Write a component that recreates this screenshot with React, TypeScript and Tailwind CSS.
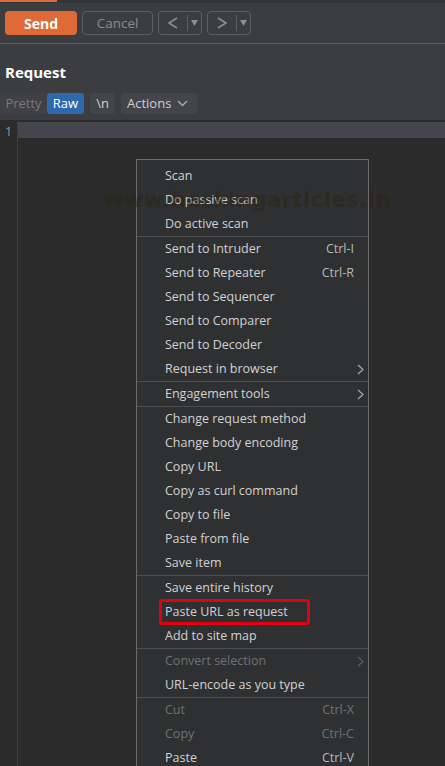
import React from "react";

type Item = { label: string; shortcut?: string; sub?: boolean; disabled?: boolean; highlight?: boolean };

const groups: Item[][] = [
  [{ label: "Scan" }, { label: "Do passive scan" }, { label: "Do active scan" }],
  [
    { label: "Send to Intruder", shortcut: "Ctrl-I" },
    { label: "Send to Repeater", shortcut: "Ctrl-R" },
    { label: "Send to Sequencer" },
    { label: "Send to Comparer" },
    { label: "Send to Decoder" },
    { label: "Request in browser", sub: true },
  ],
  [{ label: "Engagement tools", sub: true }],
  [
    { label: "Change request method" },
    { label: "Change body encoding" },
    { label: "Copy URL" },
    { label: "Copy as curl command" },
    { label: "Copy to file" },
    { label: "Paste from file" },
    { label: "Save item" },
  ],
  [{ label: "Save entire history" }, { label: "Paste URL as request", highlight: true }, { label: "Add to site map" }],
  [{ label: "Convert selection", sub: true, disabled: true }, { label: "URL-encode as you type" }],
  [
    { label: "Cut", shortcut: "Ctrl-X", disabled: true },
    { label: "Copy", shortcut: "Ctrl-C", disabled: true },
    { label: "Paste", shortcut: "Ctrl-V" },
  ],
];

function Chevron({ className }: { className?: string }) {
  return (
    <svg width="7" height="11" viewBox="0 0 7 11" className={className}>
      <path d="M1 1 L6 5.5 L1 10" fill="none" stroke="currentColor" strokeWidth="1.2" />
    </svg>
  );
}

function MenuRow({ it }: { it: Item }) {
  return (
    <div className="relative flex h-[24px] items-center pl-[28px] pr-[14px]">
      <span className={it.disabled ? "text-[#6f7072]" : "text-[#d2d2d2]"}>{it.label}</span>
      <span className="flex-1" />
      {it.shortcut && <span className={it.disabled ? "text-[#6f7072]" : "text-[#b9b9b9]"}>{it.shortcut}</span>}
      {it.sub && (
        <span className={"absolute right-[4px] top-[7px] " + (it.disabled ? "text-[#5e5f61]" : "text-[#a8a8a8]")}>
          <Chevron />
        </span>
      )}
      {it.highlight && (
        <div className="pointer-events-none absolute left-[22px] top-[-1px] h-[26px] w-[151px] rounded-[3px] border-[3px] border-[#e3000f]" />
      )}
    </div>
  );
}

function NavButton({ dir }: { dir: "l" | "r" }) {
  return (
    <div className="flex h-[24px] w-[44px] items-center rounded-[4px] border border-[#5d5e61] text-[#8d8e90]">
      <div className="flex w-[28px] justify-center">
        <svg width="14" height="14" viewBox="0 0 14 14">
          {dir === "l" ? (
            <path d="M11 2 L3 7 L11 12" fill="none" stroke="currentColor" strokeWidth="1.6" />
          ) : (
            <path d="M3 2 L11 7 L3 12" fill="none" stroke="currentColor" strokeWidth="1.6" />
          )}
        </svg>
      </div>
      <div className="h-[16px] w-px bg-[#5d5e61]" />
      <div className="flex flex-1 justify-center">
        <svg width="7" height="6" viewBox="0 0 7 6">
          <path d="M0 0 H7 L3.5 6 Z" fill="currentColor" />
        </svg>
      </div>
    </div>
  );
}

export default function App() {
  return (
    <div
      className="relative flex h-[766px] w-[445px] flex-col overflow-hidden bg-[#2b2b2b] text-[13px]"
      style={{ fontFamily: '"Open Sans", "Noto Sans", sans-serif' }}
    >
      {/* top strip */}
      <div className="flex h-[3px] bg-[#333436]">
        <div className="h-[2px] w-[57px] bg-[#e0693a]" />
      </div>
      {/* toolbar */}
      <div className="flex h-[41px] items-center gap-[5px] border-b border-[#5a5b5e] bg-[#3c3d40] pl-[5px]">
        <div className="flex h-[24px] w-[72px] items-center justify-center rounded-[4px] bg-[#df6a37] text-[14px] font-bold text-white">
          Send
        </div>
        <div className="flex h-[24px] w-[71px] items-center justify-center rounded-[4px] border border-[#5d5e61] text-[13.5px] text-[#8a8b8d]">
          Cancel
        </div>
        <NavButton dir="l" />
        <NavButton dir="r" />
      </div>
      {/* request panel */}
      <div className="flex h-[76px] flex-col bg-[#3c3d40]">
        <div className="pl-[5px] pt-[17px] text-[15px] font-bold leading-[22px] text-white">Request</div>
        <div className="mt-[10px] flex h-[21px] items-center">
          <div className="flex h-[21px] w-[47px] items-center justify-center bg-[#404144] text-[#77787a]">Pretty</div>
          <div className="flex h-[21px] w-[37px] items-center justify-center rounded-[3px] bg-[#2c69ad] text-white">Raw</div>
          <div className="ml-[6px] flex h-[21px] w-[25px] items-center justify-center rounded-[3px] bg-[#444548] text-[#cfcfcf]">
            \n
          </div>
          <div className="ml-[6px] flex h-[21px] w-[76px] items-center gap-[6px] rounded-[3px] bg-[#444548] pl-[6px] text-[#cfcfcf]">
            Actions
            <svg width="11" height="7" viewBox="0 0 11 7">
              <path d="M1 1 L5.5 5.5 L10 1" fill="none" stroke="#a9a9a9" strokeWidth="1.5" />
            </svg>
          </div>
        </div>
      </div>
      {/* editor */}
      <div className="h-[2px] bg-[#2b2b2b]" />
      <div className="flex flex-1">
        <div className="w-[18px] border-r border-[#3d3e41] pt-[1px] text-center text-[12.5px] text-[#9a9a9a]">1</div>
        <div className="flex-1">
          <div className="h-[16px] bg-[#45464d]" />
        </div>
      </div>

      {/* context menu */}
      <div className="absolute left-[136px] top-[159px] w-[233px] border border-[#6a6b6d] bg-[#2f3032] pt-[4px] pb-[40px] text-[12.5px]">
        {groups.map((g, gi) => (
          <div key={gi} className={gi > 0 ? "border-t border-[#4e4f52]" : ""}>
            {g.map((it) => (
              <MenuRow key={it.label} it={it} />
            ))}
          </div>
        ))}
      </div>

      {/* watermark */}
      <div
        aria-hidden="true"
        className="pointer-events-none absolute left-[104px] top-[185px] z-10 text-[21px] font-bold tracking-[0.5px] text-[#2a2410] opacity-[0.45]"
        style={{ fontFamily: '"DejaVu Sans", sans-serif' }}
      >
        www.hackingarticles.in
      </div>
    </div>
  );
}
